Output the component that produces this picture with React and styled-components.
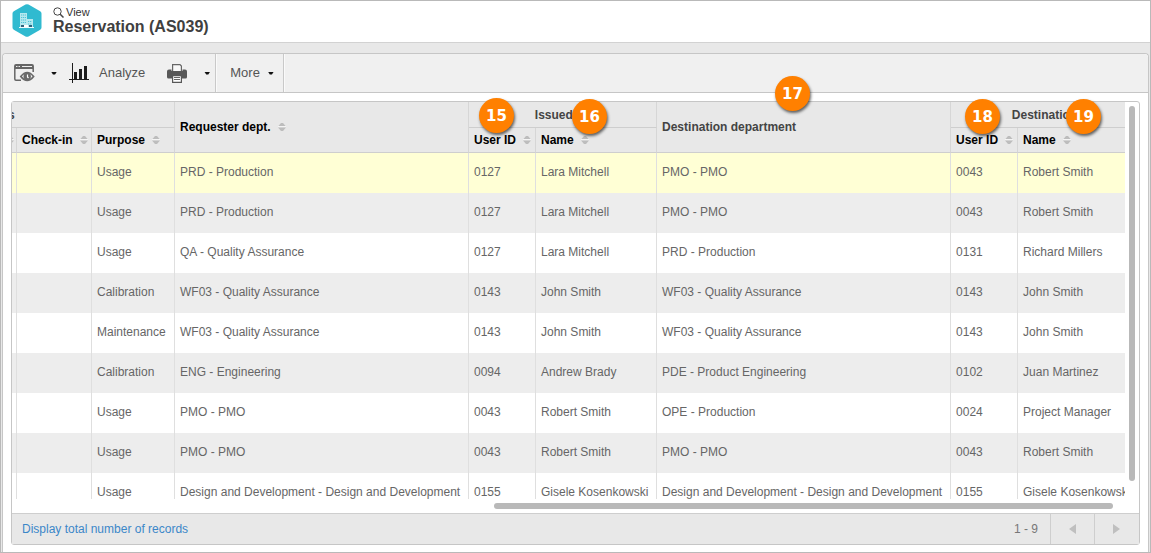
import React from "react";
import styled, { createGlobalStyle, css } from "styled-components";

const GlobalStyle = createGlobalStyle`
  *, *::before, *::after { box-sizing: border-box; }
  body {
    margin: 0;
    font-family: "Liberation Sans", Arial, sans-serif;
    font-size: 12px;
    color: #666;
    background: #fff;
  }
  button { font: inherit; color: inherit; background: none; border: 0; padding: 0; margin: 0; cursor: pointer; }
`;

const Window = styled.div`
  display: flex;
  flex-direction: column;
  height: 100vh;
  overflow: hidden;
  border: 1px solid #b9b9b9;
  background: #e8e8e8;
`;

const Header = styled.header`
  display: flex;
  flex: none;
  gap: 11px;
  height: 42px;
  padding: 3px 11px 0;
  background: #fff;
  border-bottom: 1px solid #d2d2d2;
`;

const Heading = styled.div`
  display: flex;
  flex-direction: column;
  padding-top: 1px;
`;

const Mode = styled.div`
  display: flex;
  align-items: center;
  gap: 2px;
  height: 14px;
  font-size: 11px;
  line-height: 14px;
  color: #333;
`;

const Title = styled.h1`
  margin: 0;
  font-size: 16px;
  line-height: 16px;
  font-weight: bold;
  color: #404040;
`;

const Panel = styled.main`
  display: flex;
  flex-direction: column;
  flex: 1;
  min-height: 0;
  margin: 10px 1px 0;
  background: #fff;
  border: 1px solid #c6c6c6;
  border-bottom: 0;
  border-radius: 4px 4px 0 0;
`;

const Toolbar = styled.div`
  display: flex;
  flex: none;
  height: 39px;
  background: #f0f0f0;
  border-bottom: 1px solid #c6c6c6;
  border-radius: 4px 4px 0 0;
`;

const ToolGroup = styled.div`
  display: flex;
  align-items: center;
  padding: 0 5px 0 11px;
  border-right: 1px solid #c9c9c9;
  box-shadow: 1px 0 0 #fafafa;
`;

const ToolButton = styled.button`
  display: flex;
  align-items: center;
  gap: ${(p) => p.$gap || 0}px;
  height: 100%;
  padding-left: ${(p) => p.$before || 0}px;
  padding-right: ${(p) => p.$after || 0}px;
  font-size: 13px;
  color: #555;
`;

const ToolLabel = styled.span`
  padding-bottom: 2px;
`;

const Caret = styled.span`
  width: 6px;
  height: 3px;
  background: #111;
  clip-path: polygon(0 0, 100% 0, 67% 100%, 33% 100%);
`;

const GridBox = styled.section`
  position: relative;
  display: flex;
  flex-direction: column;
  flex: 1;
  min-height: 0;
  margin: 8px;
  margin-bottom: 7px;
  border: 1px solid #c6c6c6;
  border-radius: 3px;
`;

const GridArea = styled.div`
  display: grid;
  grid-template-columns: minmax(0, 1fr) 14px;
  grid-template-rows: minmax(0, 1fr) 14px;
  flex: 1;
  min-height: 0;
`;

const Viewport = styled.div`
  overflow: hidden;
`;

const VerticalTrack = styled.div`
  padding: 4px;
`;

const HorizontalTrack = styled.div`
  display: flex;
  justify-content: flex-end;
  padding: 4px 12px 4px 4px;
`;

const Thumb = styled.div`
  width: ${(p) => p.$width || "100%"};
  height: ${(p) => p.$height || "100%"};
  background: #b9b9b9;
  border-radius: 3px;
`;

const Table = styled.table`
  table-layout: fixed;
  width: 1187px;
  margin-left: -60px;
  border-collapse: separate;
  border-spacing: 0;
  white-space: nowrap;
`;

const HeadRow = styled.tr`
  height: ${(p) => p.$height}px;
`;

const HeadCell = styled.th`
  padding: 0 5px;
  overflow: hidden;
  text-align: ${(p) => p.$align || "left"};
  font-weight: bold;
  line-height: 14px;
  color: #444;
  background: #e8e8e8;
  border-right: 1px solid #d6d6d6;
  border-bottom: 1px solid #cecece;
  ${(p) => p.$end && css`padding-right: 2px;`}
`;

const SortButton = styled.button`
  display: inline-flex;
  align-items: center;
  gap: 7px;
  font-weight: bold;
  color: #000;
  line-height: 14px;
`;

const Row = styled.tr`
  height: 40px;
  background: ${(p) => p.$background};
`;

const Cell = styled.td`
  padding: 0 5px 2px;
  line-height: 14px;
  border-right: 1px solid #dfdfdf;
`;

const Footer = styled.footer`
  display: flex;
  align-items: stretch;
  flex: none;
  height: 31px;
  padding-right: 1px;
  background: #e8e8e8;
  border-top: 1px solid #cecece;
`;

const TotalLink = styled.a`
  flex: 1;
  align-self: center;
  padding-left: 10px;
  color: #3b87c8;
  text-decoration: none;
`;

const Range = styled.span`
  align-self: center;
  padding-right: 12px;
  color: #777;
`;

const PageButton = styled.button`
  display: flex;
  align-items: center;
  justify-content: center;
  width: 44px;
  border-left: 1px solid #cecece;
`;

const Marker = styled.span`
  position: absolute;
  left: ${(p) => p.$x}px;
  top: ${(p) => p.$y}px;
  display: flex;
  align-items: center;
  justify-content: center;
  width: 35px;
  height: 35px;
  border-radius: 50%;
  background: #ff8000;
  box-shadow: 1px 2px 3px rgba(0, 0, 0, 0.6);
  font-family: "DejaVu Sans", Verdana, sans-serif;
  font-size: 15px;
  font-weight: bold;
  color: #fff;
`;

const AssetLogo = () => (
  <svg width="30" height="33" viewBox="0 0 30 33" aria-hidden="true">
    <path d="M13.5.6Q15-.3 16.500.6L28.200 7.200Q29.500 8 29.500 9.500V23.500Q29.500 25 28.200 25.800L16.500 32.400Q15 33.300 13.500 32.400L1.800 25.800Q.5 25 .5 23.500V9.500Q.5 8 1.800 7.200Z" fill="#30bad0" />
    <path d="M8 9h7v14H8zM15 15h6v8h-6z" fill="#b5e8ef" />
    <path d="M9 11h5M9 13.500h5M9 16h5M9 18.500h5M16 17.500h4M16 20h4" stroke="#4fc4d7" strokeWidth="1" strokeDasharray="1.200 .7" />
    <path d="M7 23.500h15" stroke="#eefafc" strokeWidth="1" />
    <path d="M9 21h3v2H9zM17 21h3v2h-3z" fill="#30627c" />
    <path d="M12 21h4v2h-4z" fill="#fff" />
  </svg>
);

const MagnifierIcon = () => (
  <svg width="11" height="11" viewBox="0 0 11 11" fill="none" stroke="#444" aria-hidden="true">
    <circle cx="4.500" cy="4.500" r="3.700" />
    <path d="M7.200 7.200L10.500 10.500" strokeWidth="1.500" />
  </svg>
);

const PreviewIcon = () => (
  <svg width="21" height="18" viewBox="0 0 21 18" fill="none" aria-hidden="true">
    <path d="M7 16.200H2Q.8 16.200.8 15V2Q.8.8 2 .8H18Q19.200.8 19.200 2V8" stroke="#666" strokeWidth="1.500" />
    <path d="M1 1h18v4H1z" fill="#666" />
    <path d="M2 2.500h1.500M4.500 2.500H6M8 2.500h10" stroke="#f0f0f0" strokeWidth="1.200" />
    <path d="M6.800 12.500Q13.200 4.500 19.600 12.500Q13.200 20.500 6.800 12.500Z" fill="#f0f0f0" stroke="#6a6a6a" strokeWidth="1.700" />
    <circle cx="13.200" cy="12.500" r="3.700" fill="#6a6a6a" />
    <path d="M13.500 10.500V13L14.500 14" stroke="#fff" strokeWidth="1.200" />
  </svg>
);

const ChartIcon = () => (
  <svg width="20" height="20" viewBox="0 0 20 20" fill="#1c1c1c" aria-hidden="true">
    <path d="M3 0h1v20H3zM0 16h20v1H0zM5 9h3v7H5zM10 6h3v10h-3zM15 3h3v13h-3z" />
  </svg>
);

const PrinterIcon = () => (
  <svg width="20" height="19" viewBox="0 0 20 19" aria-hidden="true">
    <path d="M5.600 7V.6h7.400l1.400 1.400V7" fill="#f8f8f8" stroke="#666" strokeWidth="1.200" />
    <path d="M2 5.500h2.500V7h11V5.500H18Q20 5.500 20 7.500V13Q20 14.500 18.500 14.500H1.500Q0 14.500 0 13V7.500Q0 5.500 2 5.500Z" fill="#585858" />
    <path d="M5.600 11.600h8.800v6.800H5.600z" fill="#fff" stroke="#585858" strokeWidth="1.200" />
    <path d="M7 13.500h6M7 15.500h6" stroke="#666" />
  </svg>
);

const SortIcon = () => (
  <svg width="8" height="8" viewBox="0 0 8 8" aria-hidden="true">
    <path d="M0 3.500L3 0H5L8 3.500Z" fill="#bdbdbd" />
    <path d="M0 4.500L3 8H5L8 4.500Z" fill="#bdbdbd" />
    <path d="M0 3.500h8" stroke="#f4f4f4" />
  </svg>
);

const Arrow = ({ d }) => (
  <svg width="7" height="10" viewBox="0 0 7 10" aria-hidden="true">
    <path d={d} fill="#bfbfbf" />
  </svg>
);

const SortHead = ({ label }) => (
  <HeadCell scope="col" $end={!label} $align={label ? "left" : "right"}>
    <SortButton aria-label={label ? undefined : "Sort"}>
      {label}
      <SortIcon />
    </SortButton>
  </HeadCell>
);

const columnWidths = [65, 75, 83, 294, 67, 121, 294, 67, 121];

const rows = [
  ["Usage", "PRD - Production", "0127", "Lara Mitchell", "PMO - PMO", "0043", "Robert Smith"],
  ["Usage", "PRD - Production", "0127", "Lara Mitchell", "PMO - PMO", "0043", "Robert Smith"],
  ["Usage", "QA - Quality Assurance", "0127", "Lara Mitchell", "PRD - Production", "0131", "Richard Millers"],
  ["Calibration", "WF03 - Quality Assurance", "0143", "John Smith", "WF03 - Quality Assurance", "0143", "John Smith"],
  ["Maintenance", "WF03 - Quality Assurance", "0143", "John Smith", "WF03 - Quality Assurance", "0143", "John Smith"],
  ["Calibration", "ENG - Engineering", "0094", "Andrew Brady", "PDE - Product Engineering", "0102", "Juan Martinez"],
  ["Usage", "PMO - PMO", "0043", "Robert Smith", "OPE - Production", "0024", "Project Manager"],
  ["Usage", "PMO - PMO", "0043", "Robert Smith", "PMO - PMO", "0043", "Robert Smith"],
  ["Usage", "Design and Development - Design and Development", "0155", "Gisele Kosenkowski", "Design and Development - Design and Development", "0155", "Gisele Kosenkowski"],
];

const rowBackground = (i) => (i === 0 ? "#ffffd5" : i % 2 ? "#ededed" : "#fff");

// Callout numbers, placed over the column headings they refer to.
const markers = [
  { n: 15, x: 467, y: -4 },
  { n: 16, x: 560, y: -3 },
  { n: 17, x: 763, y: -26 },
  { n: 18, x: 953, y: -3 },
  { n: 19, x: 1054, y: -3 },
];

const GroupStart = styled(HeadCell)`
  padding-left: 56px;
`;

export default function App() {
  return (
    <Window>
      <GlobalStyle />
      <Header>
        <AssetLogo />
        <Heading>
          <Mode>
            <MagnifierIcon />
            View
          </Mode>
          <Title>Reservation (AS039)</Title>
        </Heading>
      </Header>
      <Panel>
        <Toolbar>
          <ToolGroup>
            <ToolButton aria-label="Preview" $gap={16} $after={12}>
              <PreviewIcon />
              <Caret />
            </ToolButton>
            <ToolButton $gap={10} $after={22}>
              <ChartIcon />
              <ToolLabel>Analyze</ToolLabel>
            </ToolButton>
            <ToolButton aria-label="Print" $gap={17}>
              <PrinterIcon />
              <Caret />
            </ToolButton>
          </ToolGroup>
          <ToolGroup>
            <ToolButton $gap={8} $before={3} $after={4}>
              <ToolLabel>More</ToolLabel>
              <Caret />
            </ToolButton>
          </ToolGroup>
        </Toolbar>
        <GridBox>
          <GridArea>
            <Viewport>
              <Table>
                <colgroup>
                  {columnWidths.map((w, i) => (
                    <col key={i} width={w} />
                  ))}
                </colgroup>
                <thead>
                  <HeadRow $height={26}>
                    <GroupStart colSpan={3}>s</GroupStart>
                    <HeadCell rowSpan={2}>
                      <SortButton>
                        Requester dept.
                        <SortIcon />
                      </SortButton>
                    </HeadCell>
                    <HeadCell colSpan={2} $align="center">Issued by</HeadCell>
                    <HeadCell rowSpan={2}>Destination department</HeadCell>
                    <HeadCell colSpan={2} $align="center">Destination</HeadCell>
                  </HeadRow>
                  <HeadRow $height={25}>
                    <SortHead />
                    <SortHead label="Check-in" />
                    <SortHead label="Purpose" />
                    <SortHead label="User ID" />
                    <SortHead label="Name" />
                    <SortHead label="User ID" />
                    <SortHead label="Name" />
                  </HeadRow>
                </thead>
                <tbody>
                  {rows.map((r, i) => (
                    <Row key={i} $background={rowBackground(i)}>
                      <Cell />
                      <Cell />
                      {r.map((text, j) => (
                        <Cell key={j}>{text}</Cell>
                      ))}
                    </Row>
                  ))}
                </tbody>
              </Table>
            </Viewport>
            <VerticalTrack>
              <Thumb $height="96.4%" />
            </VerticalTrack>
            <HorizontalTrack>
              <Thumb $width="56.4%" />
            </HorizontalTrack>
          </GridArea>
          <Footer>
            <TotalLink href="#total">Display total number of records</TotalLink>
            <Range>1 - 9</Range>
            <PageButton aria-label="Previous page">
              <Arrow d="M7 0V10L0 5Z" />
            </PageButton>
            <PageButton aria-label="Next page">
              <Arrow d="M0 0V10L7 5Z" />
            </PageButton>
          </Footer>
          {markers.map((m) => (
            <Marker key={m.n} $x={m.x} $y={m.y}>
              {m.n}
            </Marker>
          ))}
        </GridBox>
      </Panel>
    </Window>
  );
}
